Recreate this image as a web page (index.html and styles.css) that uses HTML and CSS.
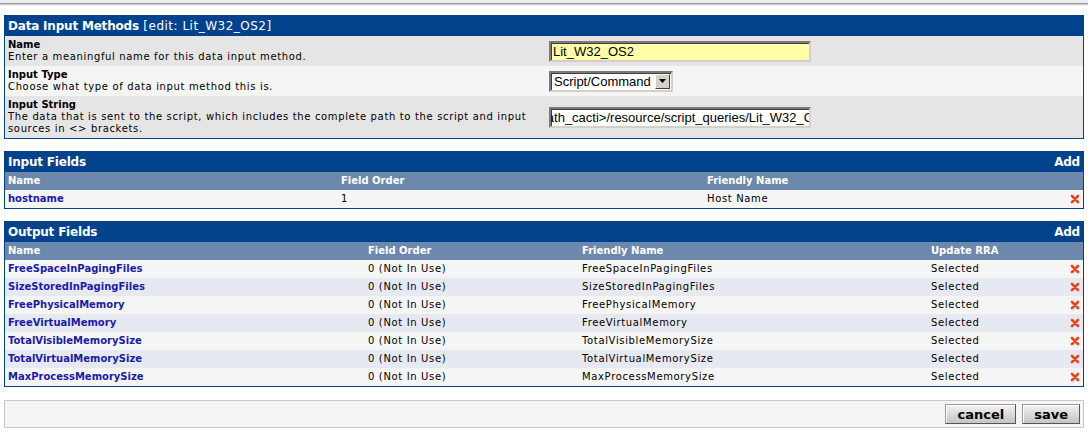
FILE: index.html
```html
<!DOCTYPE html>
<html>
<head>
<meta charset="utf-8">
<title>Data Input Methods</title>
<link rel="stylesheet" href="styles.css">
</head>
<body>
<div class="topbar"></div>
<div class="page">
  <section class="box">
    <div class="box-head"><span><strong>Data Input Methods</strong> <span class="head-sub">[edit: Lit_W32_OS2]</span></span></div>
    <div class="form-row row-dark">
      <div class="form-label">
        <div class="label-title">Name</div>
        <div class="label-desc">Enter a meaningful name for this data input method.</div>
      </div>
      <div class="form-field"><div class="textbox textbox-yellow"><span class="textbox-text">Lit_W32_OS2</span></div></div>
    </div>
    <div class="form-row row-light">
      <div class="form-label">
        <div class="label-title">Input Type</div>
        <div class="label-desc">Choose what type of data input method this is.</div>
      </div>
      <div class="form-field">
        <div class="selectbox"><span class="select-text">Script/Command</span><span class="select-arrow"><svg width="7" height="4" viewBox="0 0 7 4"><path d="M0 0H7L3.5 4Z" fill="#000"/></svg></span></div>
      </div>
    </div>
    <div class="form-row row-dark">
      <div class="form-label">
        <div class="label-title">Input String</div>
        <div class="label-desc">The data that is sent to the script, which includes the complete path to the script and input sources in &lt;&gt; brackets.</div>
      </div>
      <div class="form-field"><div class="textbox"><span class="textbox-text textbox-scrolled">&lt;path_cacti&gt;/resource/script_queries/Lit_W32_OS2.xml</span></div></div>
    </div>
  </section>

  <section class="box">
    <div class="box-head"><strong>Input Fields</strong><strong>Add</strong></div>
    <table class="list">
      <colgroup><col class="in-c1"><col class="in-c2"><col><col class="c-icon"></colgroup>
      <tr class="list-head"><th>Name</th><th>Field Order</th><th>Friendly Name</th><th></th></tr>
      <tr class="row-a"><td><a class="link" href="#">hostname</a></td><td>1</td><td>Host Name</td><td class="icon-cell"><svg class="del" width="10" height="10" viewBox="0 0 10 10"><path d="M2 2L8 8M8 2L2 8" stroke="#e8441d" stroke-width="2.6" stroke-linecap="round"/></svg></td></tr>
    </table>
  </section>

  <section class="box">
    <div class="box-head"><strong>Output Fields</strong><strong>Add</strong></div>
    <table class="list">
      <colgroup><col class="out-c1"><col class="out-c2"><col class="out-c3"><col><col class="c-icon"></colgroup>
      <tr class="list-head"><th>Name</th><th>Field Order</th><th>Friendly Name</th><th>Update RRA</th><th></th></tr>
      <tr class="row-a"><td><a class="link" href="#">FreeSpaceInPagingFiles</a></td><td>0 (Not In Use)</td><td>FreeSpaceInPagingFiles</td><td>Selected</td><td class="icon-cell"><svg class="del" width="10" height="10" viewBox="0 0 10 10"><path d="M2 2L8 8M8 2L2 8" stroke="#e8441d" stroke-width="2.6" stroke-linecap="round"/></svg></td></tr>
      <tr class="row-b"><td><a class="link" href="#">SizeStoredInPagingFiles</a></td><td>0 (Not In Use)</td><td>SizeStoredInPagingFiles</td><td>Selected</td><td class="icon-cell"><svg class="del" width="10" height="10" viewBox="0 0 10 10"><path d="M2 2L8 8M8 2L2 8" stroke="#e8441d" stroke-width="2.6" stroke-linecap="round"/></svg></td></tr>
      <tr class="row-a"><td><a class="link" href="#">FreePhysicalMemory</a></td><td>0 (Not In Use)</td><td>FreePhysicalMemory</td><td>Selected</td><td class="icon-cell"><svg class="del" width="10" height="10" viewBox="0 0 10 10"><path d="M2 2L8 8M8 2L2 8" stroke="#e8441d" stroke-width="2.6" stroke-linecap="round"/></svg></td></tr>
      <tr class="row-b"><td><a class="link" href="#">FreeVirtualMemory</a></td><td>0 (Not In Use)</td><td>FreeVirtualMemory</td><td>Selected</td><td class="icon-cell"><svg class="del" width="10" height="10" viewBox="0 0 10 10"><path d="M2 2L8 8M8 2L2 8" stroke="#e8441d" stroke-width="2.6" stroke-linecap="round"/></svg></td></tr>
      <tr class="row-a"><td><a class="link" href="#">TotalVisibleMemorySize</a></td><td>0 (Not In Use)</td><td>TotalVisibleMemorySize</td><td>Selected</td><td class="icon-cell"><svg class="del" width="10" height="10" viewBox="0 0 10 10"><path d="M2 2L8 8M8 2L2 8" stroke="#e8441d" stroke-width="2.6" stroke-linecap="round"/></svg></td></tr>
      <tr class="row-b"><td><a class="link" href="#">TotalVirtualMemorySize</a></td><td>0 (Not In Use)</td><td>TotalVirtualMemorySize</td><td>Selected</td><td class="icon-cell"><svg class="del" width="10" height="10" viewBox="0 0 10 10"><path d="M2 2L8 8M8 2L2 8" stroke="#e8441d" stroke-width="2.6" stroke-linecap="round"/></svg></td></tr>
      <tr class="row-a"><td><a class="link" href="#">MaxProcessMemorySize</a></td><td>0 (Not In Use)</td><td>MaxProcessMemorySize</td><td>Selected</td><td class="icon-cell"><svg class="del" width="10" height="10" viewBox="0 0 10 10"><path d="M2 2L8 8M8 2L2 8" stroke="#e8441d" stroke-width="2.6" stroke-linecap="round"/></svg></td></tr>
    </table>
  </section>

  <div class="actions">
    <button class="btn" type="button">cancel</button>
    <button class="btn" type="button">save</button>
  </div>
</div>
</body>
</html>
```

FILE: styles.css
```css
html, body {
  margin: 0;
  padding: 0;
  background: #ffffff;
  font-family: "DejaVu Sans", Verdana, sans-serif;
  font-size: 10px;
  letter-spacing: 0.65px;
  color: #000;
}

.topbar {
  height: 3px;
  background: #eeeeee;
  border-bottom: 1px solid #9a9a9a;
  box-shadow: 0 1px 2px rgba(0, 0, 0, 0.25);
}

.page {
  padding: 11px 4px 0 4px;
}

.box {
  border: 1px solid #00438c;
  margin-bottom: 12px;
}

.box-head {
  background: #00438c;
  color: #ffffff;
  font-size: 12px;
  line-height: 14px;
  padding: 3px 3px 3px 3px;
  display: flex;
  justify-content: space-between;
}

.box-head strong {
  font-weight: bold;
  letter-spacing: -0.2px;
}

.head-sub {
  font-weight: normal;
  letter-spacing: 0.5px;
}

.form-row {
  display: grid;
  grid-template-columns: 541px 1fr;
}

.row-dark { background: #e5e5e5; }
.row-light { background: #f5f5f5; }

.form-label {
  padding: 3px 3px;
  line-height: 12px;
}

.label-title {
  font-weight: bold;
  letter-spacing: 0;
}

.form-field {
  display: flex;
  align-items: center;
  padding-left: 3px;
}

.textbox {
  width: 258px;
  height: 17px;
  background: #ffffff;
  border-style: solid;
  border-width: 2px;
  border-color: #7a7a7a #d4d0c8 #d4d0c8 #7a7a7a;
  box-shadow: inset 1px 1px 0 #404040;
  overflow: hidden;
  white-space: nowrap;
  font-family: "Liberation Sans", Arial, sans-serif;
  font-size: 13px;
  letter-spacing: 0;
  line-height: 17px;
}

.textbox-yellow {
  background: #ffffaa;
}

.textbox-text {
  display: inline-block;
  padding-left: 2px;
}

.textbox-scrolled {
  margin-left: -21px;
}

.selectbox {
  width: 120px;
  height: 17px;
  background: #ffffff;
  border-style: solid;
  border-width: 2px;
  border-color: #7a7a7a #d4d0c8 #d4d0c8 #7a7a7a;
  box-shadow: inset 1px 1px 0 #404040;
  display: flex;
  align-items: center;
  justify-content: space-between;
  font-family: "Liberation Sans", Arial, sans-serif;
  font-size: 13px;
  letter-spacing: 0;
  line-height: 17px;
}

.select-text {
  padding-left: 3px;
  white-space: nowrap;
}

.select-arrow {
  width: 15px;
  height: 15px;
  margin-right: 1px;
  background: #d4d0c8;
  border-style: solid;
  border-width: 1px;
  border-color: #ffffff #404040 #404040 #ffffff;
  box-sizing: border-box;
  display: flex;
  align-items: center;
  justify-content: center;
}

.list {
  width: 100%;
  border-collapse: collapse;
  table-layout: fixed;
}

.in-c1 { width: 333px; }
.in-c2 { width: 366px; }
.out-c1 { width: 360px; }
.out-c2 { width: 214px; }
.out-c3 { width: 349px; }
.c-icon { width: 20px; }

.list th,
.list td {
  padding: 3px 3px;
  line-height: 12px;
  height: 12px;
  text-align: left;
  white-space: nowrap;
  overflow: hidden;
}

.list-head {
  background: #6d88ad;
  color: #ffffff;
}

.list-head th {
  font-weight: bold;
  letter-spacing: 0;
}

.row-a { background: #f5f5f5; }
.row-b { background: #e7e9f2; }

.link {
  color: #1b1ba8;
  font-weight: bold;
  letter-spacing: 0;
  text-decoration: none;
}

.list .icon-cell {
  text-align: right;
  padding-right: 3px;
}

.del {
  display: inline-block;
  vertical-align: middle;
}

.actions {
  margin-top: 13px;
  border: 1px solid #c8c8c8;
  background: #f5f5f5;
  padding: 3px 3px;
  display: flex;
  justify-content: flex-end;
  gap: 6px;
}

.btn {
  height: 20px;
  padding: 0 11px;
  margin: 0;
  font-family: "DejaVu Sans", Verdana, sans-serif;
  font-weight: bold;
  font-size: 13px;
  letter-spacing: 0;
  color: #000;
  background: linear-gradient(#f2f2f2, #c4c4c4);
  border: 1px solid;
  border-color: #9a9a9a #555555 #555555 #9a9a9a;
  box-shadow: inset 1px 1px 0 #ffffff;
  cursor: pointer;
}
```
